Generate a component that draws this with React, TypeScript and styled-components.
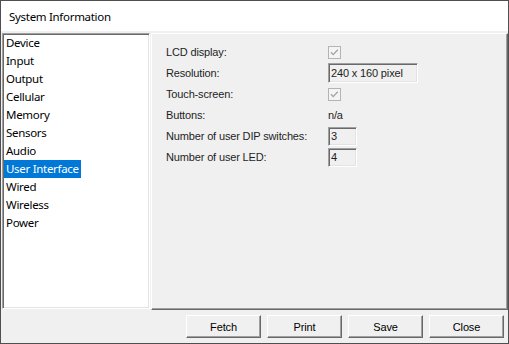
import styled, { createGlobalStyle } from 'styled-components';

const GlobalStyle = createGlobalStyle`
  body {
    margin: 0;
    background: #ffffff;
  }
`;

const Window = styled.div`
  width: 509px;
  height: 344px;
  box-sizing: border-box;
  border: 1px solid #4f4f4f;
  background: #f0f0f0;
  display: flex;
  flex-direction: column;
  font-family: 'Liberation Sans', Arial, sans-serif;
`;

const TitleBar = styled.div`
  height: 30px;
  flex-shrink: 0;
  background: #ffffff;
  display: flex;
  align-items: center;
  padding-left: 8px;
  font-family: 'Segoe UI', 'Noto Sans', sans-serif;
  font-size: 11.5px;
  letter-spacing: -0.3px;
  color: #000000;
`;

const Body = styled.div`
  display: flex;
  align-items: flex-start;
  gap: 1px;
  padding: 2px 0 0 1px;
`;

const CategoryList = styled.ul`
  list-style: none;
  margin: 0;
  padding: 0;
  width: 148px;
  height: 276px;
  box-sizing: border-box;
  background: #ffffff;
  border: 1px solid;
  border-color: #a0a0a0 #ffffff #ffffff #a0a0a0;
  box-shadow: inset 1px 1px #696969, inset -1px -1px #e3e3e3;
  font-family: 'Segoe UI', 'Noto Sans', sans-serif;
  font-size: 11.5px;
  letter-spacing: -0.3px;
`;

const CategoryItem = styled.li`
  height: 18px;
  line-height: 18px;
  margin-left: 1px;
`;

const CategoryLabel = styled.span<{ $selected?: boolean }>`
  display: inline-block;
  padding: 0 2px;
  background: ${(p) => (p.$selected ? '#0078d7' : 'transparent')};
  color: ${(p) => (p.$selected ? '#ffffff' : '#000000')};
`;

const Panel = styled.div`
  width: 357px;
  height: 277px;
  box-sizing: border-box;
  border: 1px solid;
  border-color: #ffffff #696969 #696969 #ffffff;
  box-shadow: inset -1px -1px #a0a0a0;
  padding: 8px 0 0 14px;
`;

const PropertyGrid = styled.div`
  display: grid;
  grid-template-columns: 162px auto;
  grid-auto-rows: 20px;
  row-gap: 1px;
  align-items: center;
  font-size: 11px;
  letter-spacing: -0.15px;
  color: #1e1e1e;
`;

const Label = styled.span``;

const Value = styled.span`
  display: flex;
  align-items: center;
`;

const Field = styled.div<{ $width: number; $height: number }>`
  width: ${(p) => p.$width}px;
  height: ${(p) => p.$height}px;
  box-sizing: border-box;
  border: 1px solid;
  border-color: #a0a0a0 #ffffff #ffffff #a0a0a0;
  box-shadow: inset 1px 1px #696969, inset -1px -1px #e3e3e3;
  background: #f0f0f0;
  padding-left: 2px;
  display: flex;
  align-items: center;
  font-size: 11px;
`;

const Footer = styled.div`
  flex: 1;
  display: flex;
  justify-content: flex-end;
  align-items: flex-start;
  gap: 6px;
  padding: 5px 4px 0 0;
`;

const Button = styled.button`
  width: 75px;
  height: 23px;
  box-sizing: border-box;
  margin: 0;
  padding: 0;
  background: #f0f0f0;
  border: 1px solid;
  border-color: #ffffff #696969 #696969 #ffffff;
  box-shadow: inset -1px -1px #a0a0a0;
  font-family: 'Liberation Sans', Arial, sans-serif;
  font-size: 11px;
  letter-spacing: -0.15px;
  color: #000000;
`;

const CheckBox = () => (
  <svg width="13" height="13" viewBox="0 0 13 13">
    <rect x="0.5" y="0.5" width="12" height="12" fill="#f4f4f4" stroke="#b4b4b4" />
    <path d="M3 6.2 L5.2 8.6 L9.8 3.8" fill="none" stroke="#a2a2a2" strokeWidth="1.3" />
  </svg>
);

const categories = [
  'Device',
  'Input',
  'Output',
  'Cellular',
  'Memory',
  'Sensors',
  'Audio',
  'User Interface',
  'Wired',
  'Wireless',
  'Power',
];

const App = () => {
  return (
    <>
      <GlobalStyle />
      <Window>
        <TitleBar>System Information</TitleBar>
        <Body>
          <CategoryList>
            {categories.map((name) => (
              <CategoryItem key={name}>
                <CategoryLabel $selected={name === 'User Interface'}>{name}</CategoryLabel>
              </CategoryItem>
            ))}
          </CategoryList>
          <Panel>
            <PropertyGrid>
              <Label>LCD display:</Label>
              <Value>
                <CheckBox />
              </Value>
              <Label>Resolution:</Label>
              <Field $width={90} $height={20}>240 x 160 pixel</Field>
              <Label>Touch-screen:</Label>
              <Value>
                <CheckBox />
              </Value>
              <Label>Buttons:</Label>
              <Value>n/a</Value>
              <Label>Number of user DIP switches:</Label>
              <Field $width={29} $height={19}>3</Field>
              <Label>Number of user LED:</Label>
              <Field $width={29} $height={19}>4</Field>
            </PropertyGrid>
          </Panel>
        </Body>
        <Footer>
          <Button>Fetch</Button>
          <Button>Print</Button>
          <Button>Save</Button>
          <Button>Close</Button>
        </Footer>
      </Window>
    </>
  );
};

export default App;
